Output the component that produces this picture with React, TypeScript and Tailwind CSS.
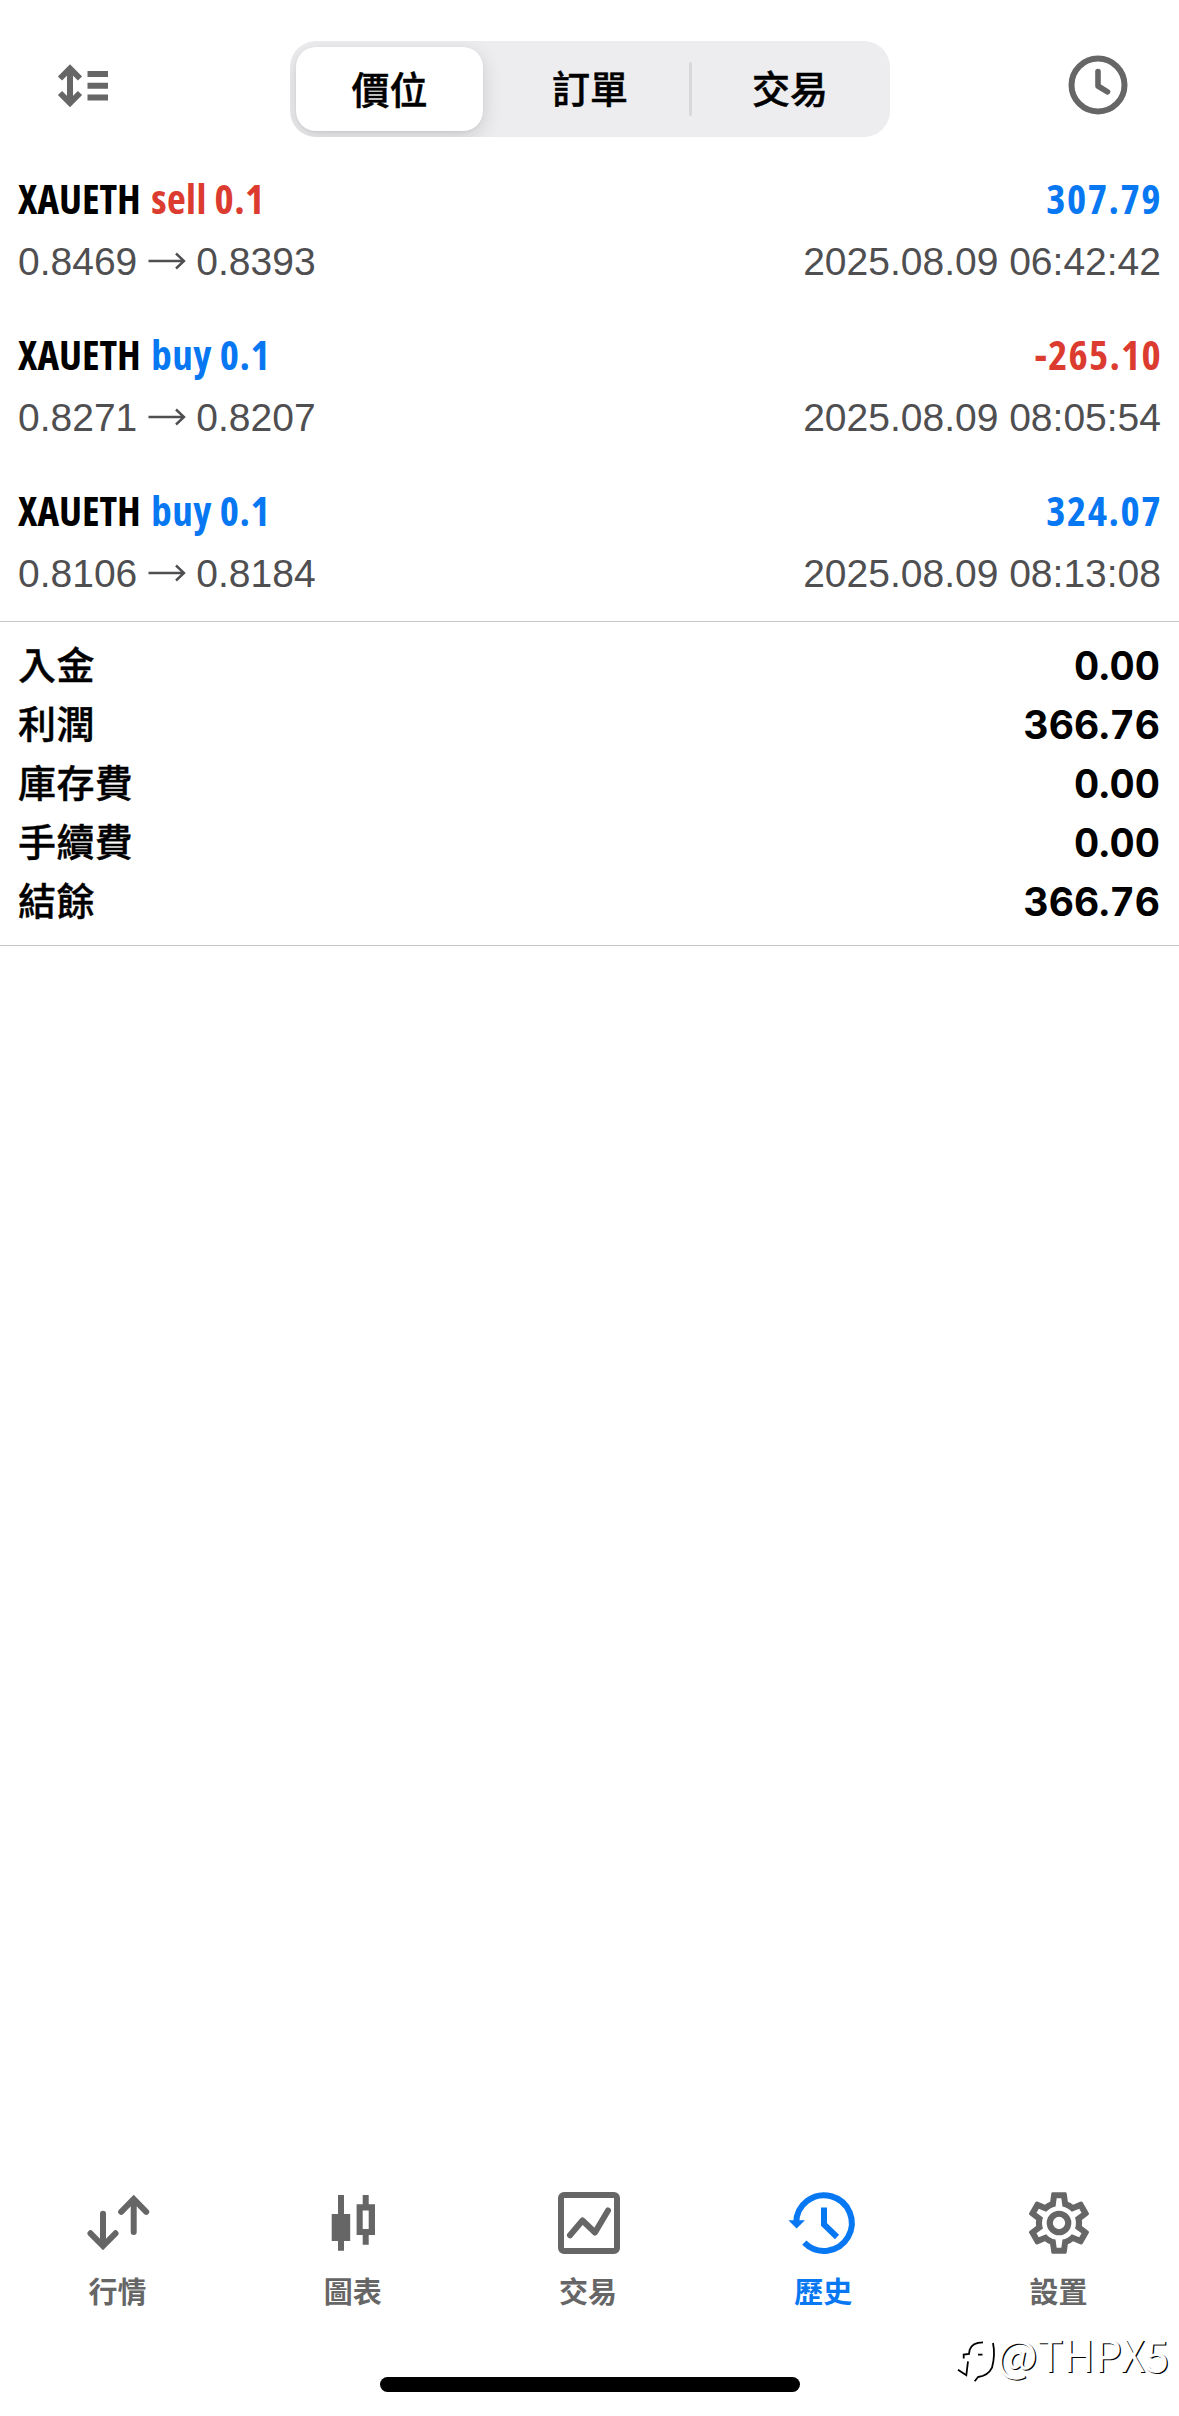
import type { ReactNode } from 'react';

type Deal = {
  symbol: string;
  side: 'buy' | 'sell';
  volume: string;
  open: string;
  close: string;
  profit: string;
  time: string;
};

const deals: Deal[] = [
  { symbol: 'XAUETH', side: 'sell', volume: '0.1', open: '0.8469', close: '0.8393', profit: '307.79', time: '2025.08.09 06:42:42' },
  { symbol: 'XAUETH', side: 'buy', volume: '0.1', open: '0.8271', close: '0.8207', profit: '-265.10', time: '2025.08.09 08:05:54' },
  { symbol: 'XAUETH', side: 'buy', volume: '0.1', open: '0.8106', close: '0.8184', profit: '324.07', time: '2025.08.09 08:13:08' },
];

const summary = [
  { label: '入金', value: '0.00' },
  { label: '利潤', value: '366.76' },
  { label: '庫存費', value: '0.00' },
  { label: '手續費', value: '0.00' },
  { label: '結餘', value: '366.76' },
];

const SortIcon = () => (
  <svg className="w-[54px] h-[48px]" viewBox="0 0 54 48" fill="none" stroke="#666" strokeWidth="6">
    <path d="M14 6V41M4 16.5L14 6.5L24 16.5M4 31L14 41L24 31" />
    <path d="M31.5 12H52M31.5 23.7H52M31.5 35.5H52" />
  </svg>
);

const ClockIcon = () => (
  <svg className="w-[60px] h-[60px]" viewBox="0 0 60 60" fill="none" stroke="#666" strokeWidth="6">
    <circle cx="30" cy="30" r="26.5" />
    <path d="M30 16.5V31L39.5 36.8" strokeLinecap="round" strokeLinejoin="round" strokeWidth="5.6" />
  </svg>
);

const ArrowIcon = () => (
  <svg className="w-[38px] h-[20px]" viewBox="0 0 38 20" fill="none" stroke="#4f4f51" strokeWidth="2.4">
    <path d="M0.5 9H36M28 1.5L36 9L28 16.5" />
  </svg>
);

const QuotesIcon = () => (
  <g fill="none" stroke="currentColor" strokeWidth="6" strokeLinecap="round">
    <path d="M21 27.7V59M8.5 47.3L21 60L33.5 47.3" />
    <path d="M51.7 46V14M39.2 25.8L51.7 13L64.2 25.8" />
  </g>
);

const ChartIcon = () => (
  <g fill="currentColor">
    <path d="M21 9h6v19h6.2v27H27v9.7h-6V55h-6.3V28H21z" />
    <path fillRule="evenodd" d="M45.7 9h6v9.3h6.3V49h-6.3v9.7h-6V49h-6.1V18.3h6.1zM45.7 24.6V43h6V24.6z" />
  </g>
);

const TradeIcon = () => (
  <g fill="none" stroke="currentColor" strokeWidth="6">
    <path d="M12 6H62a6 6 0 0 1 6 6V62a6 6 0 0 1-6 6H12a6 6 0 0 1-6-6V12a6 6 0 0 1 6-6zM12 12V62H62V12z" fill="currentColor" fillRule="evenodd" stroke="none" />
    <path d="M18 49.3L30.5 34.5L43 46.5L56 24.5" strokeLinecap="round" strokeLinejoin="round" />
  </g>
);

const HistoryIcon = () => (
  <g fill="none" stroke="currentColor" strokeWidth="6">
    <path d="M9.2 37A27.8 27.8 0 1 1 17.3 56.7" />
    <path d="M37 21.5V38.5L50 51" />
    <path d="M1.3 34.2H18L9.6 42.6z" fill="currentColor" stroke="none" />
  </g>
);

const SettingsIcon = () => (
  <path
    transform="scale(3.0833)"
    fill="currentColor"
    d="M12,8A4,4 0 0,1 16,12A4,4 0 0,1 12,16A4,4 0 0,1 8,12A4,4 0 0,1 12,8M12,10A2,2 0 0,0 10,12A2,2 0 0,0 12,14A2,2 0 0,0 14,12A2,2 0 0,0 12,10M10,22C9.75,22 9.54,21.82 9.5,21.58L9.13,18.93C8.5,18.68 7.96,18.34 7.44,17.94L4.95,18.95C4.73,19.03 4.46,18.95 4.34,18.73L2.34,15.27C2.21,15.05 2.27,14.78 2.46,14.63L4.57,12.97L4.5,12L4.57,11L2.46,9.37C2.27,9.22 2.21,8.95 2.34,8.73L4.34,5.27C4.46,5.05 4.73,4.96 4.95,5.05L7.44,6.05C7.96,5.66 8.5,5.32 9.13,5.07L9.5,2.42C9.54,2.18 9.75,2 10,2H14C14.25,2 14.46,2.18 14.5,2.42L14.87,5.07C15.5,5.32 16.04,5.66 16.56,6.05L19.05,5.05C19.27,4.96 19.54,5.05 19.66,5.27L21.66,8.73C21.79,8.95 21.73,9.22 21.54,9.37L19.43,11L19.5,12L19.43,13L21.54,14.63C21.73,14.78 21.79,15.05 21.66,15.27L19.66,18.73C19.54,18.95 19.27,19.04 19.05,18.95L16.56,17.95C16.04,18.34 15.5,18.68 14.87,18.93L14.5,21.58C14.46,21.82 14.25,22 14,22H10M11.25,4L10.88,6.61C9.68,6.86 8.62,7.5 7.85,8.39L5.44,7.35L4.69,8.65L6.8,10.2C6.4,11.37 6.4,12.64 6.8,13.8L4.68,15.36L5.43,16.66L7.86,15.62C8.63,16.5 9.68,17.14 10.87,17.38L11.24,20H12.76L13.13,17.39C14.32,17.14 15.37,16.5 16.14,15.62L18.57,16.66L19.32,15.36L17.2,13.81C17.6,12.64 17.6,11.37 17.2,10.2L19.31,8.65L18.56,7.35L16.15,8.39C15.38,7.5 14.32,6.86 13.12,6.62L12.75,4H11.25Z"
  />
);

const Header = () => (
  <header className="h-[162px] flex items-start justify-between pl-[56px] pr-[51px]">
    <button className="mt-[62px]"><SortIcon /></button>
    <div className="mt-[41px] ml-[2px] w-[600px] h-24 rounded-[26px] bg-[#ededef] overflow-hidden grid grid-cols-3 items-center text-center text-[38px] font-medium [-webkit-text-stroke:0.5px_#000] text-black">
      <div className="ml-[6px] mr-[7px] h-[84px] leading-[86px] rounded-[20px] bg-white shadow-[0_6px_20px_rgba(0,0,0,0.14),0_1px_3px_rgba(0,0,0,0.06)]">價位</div>
      <div className="leading-[86px]">訂單</div>
      <div className="relative leading-[86px]">
        <span className="absolute left-[-1px] top-[16px] h-[54px] w-[3px] rounded-full bg-[#d8d8db]" />
        交易
      </div>
    </div>
    <button className="mt-[55px]"><ClockIcon /></button>
  </header>
);

const DealRow = ({ deal }: { deal: Deal }) => (
  <div className="h-[156px] pt-[8px] px-[18px]">
    <div className="h-[56px] flex justify-between font-['Open_Sans'] [font-stretch:75%] font-bold text-[41px] leading-[56px]">
      <div className="whitespace-pre">
        <span className="text-black">{deal.symbol} </span>
        <span className={deal.side === 'sell' ? 'ml-[3px] tracking-[0.4px] text-[#dc3c30]' : 'ml-[3px] tracking-[0.5px] text-[#0878f2]'}>{deal.side} {deal.volume}</span>
      </div>
      <div className={deal.profit.startsWith('-') ? '-mr-[1px] tracking-[1.2px] text-[#dc3c30]' : '-mr-[1px] tracking-[1.5px] text-[#0878f2]'}>{deal.profit}</div>
    </div>
    <div className="mt-[13px] flex justify-between font-['Liberation_Sans'] text-[39px] leading-[46px] text-[#4f4f51]">
      <div className="flex items-center">
        {deal.open}
        <span className="ml-[11px] mr-[10px]"><ArrowIcon /></span>
        {deal.close}
      </div>
      <div>{deal.time}</div>
    </div>
  </div>
);

const Tab = ({ label, active, children }: { label: string; active?: boolean; children: ReactNode }) => (
  <button className={`flex flex-col items-center ${active ? 'text-[#0878f2]' : 'text-[#666]'}`}>
    <svg className="ml-[2px] w-[74px] h-[74px]" viewBox="0 0 74 74">{children}</svg>
    <span className="mt-[11px] text-[29px] leading-[44px] font-semibold">{label}</span>
  </button>
);

const Watermark = () => (
  <div className="absolute right-[10px] top-[2318px] flex items-center font-['Noto_Sans_CJK_SC'] text-[43px] leading-[56px] text-white [text-shadow:1.2px_1.2px_0.5px_#000]">
    <svg className="mt-[20px] w-[42px] h-[50px]" viewBox="0 0 42 50" fill="none" stroke="#000" strokeWidth="1.8">
      <path d="M8.7 20.5V16.5L14 16L14.7 11.7Q17 4.5 28 4.3M38 5Q40.5 17 37 29.7Q33 38 23 39L19.7 43.3M3 31.7L11.3 37.3L13 23.3M23 16.7h4.5" />
    </svg>
    @THPX5
  </div>
);

export default function App() {
  return (
    <div className="relative w-full h-[2416px] flex flex-col bg-white overflow-hidden font-['Inter','Noto_Sans_CJK_TC',sans-serif]">
      <Header />
      <main className="flex-1">
        <section className="h-[460px] border-b border-[#c6c6c8]">
          {deals.map((deal) => (
            <DealRow key={deal.time} deal={deal} />
          ))}
        </section>
        <section className="h-[324px] pt-[14px] pl-[18px] pr-[19px] border-b border-[#c6c6c8] leading-[59px] text-black">
          {summary.map((row) => (
            <div key={row.label} className="h-[59px] flex justify-between">
              <span className="text-[38px] tracking-[0.4px] font-medium [-webkit-text-stroke:0.4px_#000]">{row.label}</span>
              <span className="text-[39px] font-bold tabular-nums">{row.value}</span>
            </div>
          ))}
        </section>
      </main>
      <nav className="h-[191px] mr-[3px] grid grid-cols-5">
        <Tab label="行情"><QuotesIcon /></Tab>
        <Tab label="圖表"><ChartIcon /></Tab>
        <Tab label="交易"><TradeIcon /></Tab>
        <Tab label="歷史" active><HistoryIcon /></Tab>
        <Tab label="設置"><SettingsIcon /></Tab>
      </nav>
      <div className="mx-auto mb-[24px] w-[420px] h-[15px] rounded-full bg-black" />
      <Watermark />
    </div>
  );
}
